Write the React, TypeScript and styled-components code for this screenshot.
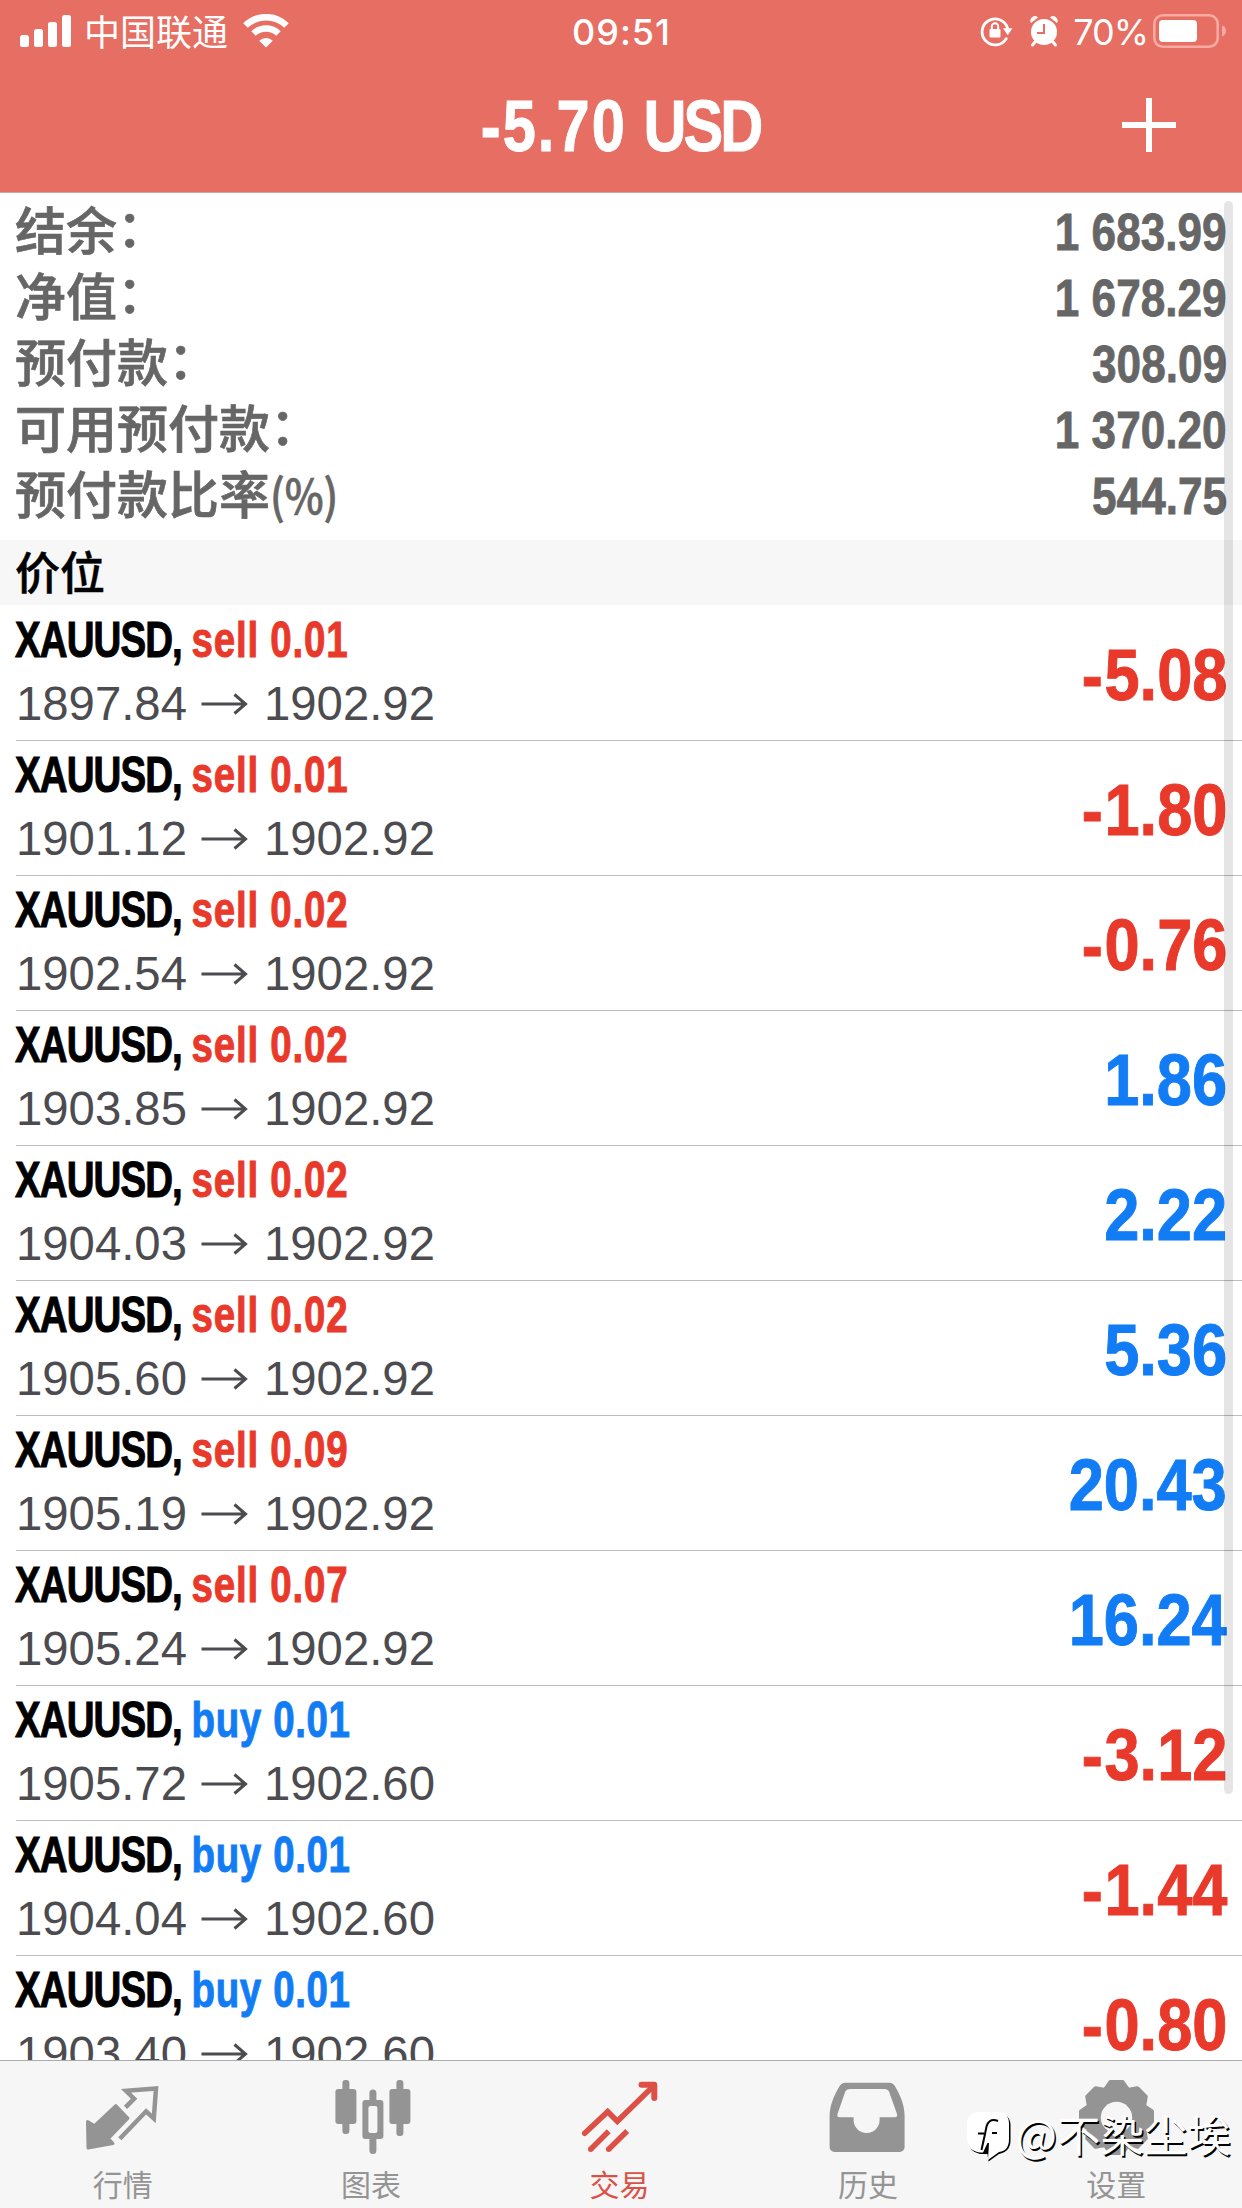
import React from 'react';
import styled, { createGlobalStyle } from 'styled-components';

const GlobalStyle = createGlobalStyle`
  * {
    box-sizing: border-box;
  }

  body {
    margin: 0;
    background: #fff;
    font-family: 'Liberation Sans', 'Noto Sans CJK SC', sans-serif;
  }
`;

// Styled Components
const Screen = styled.div`
  position: relative;
  display: flex;
  flex-direction: column;
  width: 1242px;
  height: 2208px;
  overflow: hidden;
  background: #fff;
`;

const Header = styled.header`
  flex: none;
  height: 193px;
  background: #e66e62;
  border-bottom: 1px solid #c3aaa7;
  color: #fff;
`;

const StatusBar = styled.div`
  display: grid;
  grid-template-columns: 1fr auto 1fr;
  align-items: center;
  height: 60px;
  padding: 0 16px 0 20px;
`;

const StatusGroup = styled.div<{ $end?: boolean }>`
  display: flex;
  align-items: center;
  justify-content: ${({ $end }) => ($end ? 'flex-end' : 'flex-start')};

  svg {
    display: block;
    flex: none;
  }
`;

const StatusGap = styled.div`
  width: 17px;
`;

const Carrier = styled.span`
  margin: -2px 15px 0 12px;
  font-family: 'Noto Sans CJK SC', sans-serif;
  font-size: 36px;
  line-height: 60px;
`;

const Clock = styled.span`
  margin-right: 3px;
  font-family: Inter, sans-serif;
  font-size: 36px;
  font-weight: 500;
  line-height: 60px;
  letter-spacing: 1px;
  padding-top: 2px;
`;

const BatteryText = styled.span`
  margin: 0 5px 0 15px;
  font-family: Inter, sans-serif;
  font-size: 36px;
  line-height: 60px;
  letter-spacing: -1px;
  padding-top: 2px;
`;

const TitleBar = styled.div`
  display: grid;
  grid-template-columns: 1fr auto 1fr;
  align-items: center;
  height: 132px;
`;

const Title = styled.h1`
  grid-column: 2;
  margin: 0;
  font-size: 73px;
  font-weight: 700;
  line-height: 132px;
  transform: scaleX(0.815);
  -webkit-text-stroke: 1px currentColor;
`;

const Amount = styled.span`
  letter-spacing: 2.6px;
`;

const Currency = styled.span`
  letter-spacing: -3.6px;
`;

const AddButton = styled.button`
  justify-self: end;
  width: 54px;
  height: 54px;
  margin: 0 66px 2px 0;
  padding: 0;
  border: none;
  background: transparent;
  color: #fff;

  svg {
    display: block;
  }
`;

const Content = styled.main`
  flex: 1;
  min-height: 0;
  overflow: hidden;
`;

const Summary = styled.section`
  height: 347px;
  padding: 7px 15px 0;
`;

const SummaryRow = styled.div`
  display: flex;
  justify-content: space-between;
  height: 66px;
  color: #666;
`;

const SummaryLabel = styled.span`
  font-family: 'Noto Sans CJK SC', sans-serif;
  font-size: 51px;
  font-weight: 500;
  line-height: 56px;
  -webkit-text-stroke: 0.7px currentColor;
`;

const Colon = styled.span`
  vertical-align: 3px;
  line-height: 0;
`;

const Unit = styled.span`
  display: inline-block;
  font-size: 47px;
  line-height: 56px;
  transform: scaleX(0.88);
  transform-origin: left center;
`;

const SummaryValue = styled.span`
  font-size: 51px;
  font-weight: 700;
  line-height: 65px;
  transform: scaleX(0.865);
  transform-origin: right center;
  -webkit-text-stroke: 0.8px currentColor;
`;

const SectionTitle = styled.h2`
  height: 66px;
  margin: 0;
  padding-left: 15px;
  border-bottom: 1px solid #fff;
  background: #f7f7f7;
  color: #000;
  font-family: 'Noto Sans CJK SC', sans-serif;
  font-size: 45px;
  font-weight: 500;
  line-height: 62px;
  -webkit-text-stroke: 0.5px currentColor;
`;

const Position = styled.div`
  display: flex;
  justify-content: space-between;
  height: 135px;
  margin-left: 16px;
  padding-right: 15px;
  border-bottom: 1px solid #bcbcbe;
`;

const PositionInfo = styled.div`
  padding-top: 6px;
`;

const PositionName = styled.div`
  height: 60px;
  margin-left: -1px;
  color: #000;
  font-size: 50px;
  font-weight: 700;
  line-height: 57px;
  white-space: pre;
  transform: scaleX(0.77);
  transform-origin: left center;
  -webkit-text-stroke: 1px currentColor;
`;

const SymbolName = styled.span`
  letter-spacing: -1.2px;
`;

const Side = styled.span<{ $side: 'buy' | 'sell' }>`
  color: ${({ $side }) => ($side === 'buy' ? '#127cf5' : '#e8392b')};
  letter-spacing: ${({ $side }) => ($side === 'buy' ? '0.8px' : '1px')};
`;

const PriceLine = styled.div`
  display: flex;
  align-items: center;
  height: 64px;
  color: #4c4c50;
  font-size: 47.3px;
  line-height: 64px;

  svg {
    margin: 0 16px 0 13px;
  }
`;

const Profit = styled.div<{ $loss: boolean }>`
  color: ${({ $loss }) => ($loss ? '#e8392b' : '#127cf5')};
  font-size: 73px;
  font-weight: 700;
  line-height: 138px;
  transform: scaleX(0.865);
  transform-origin: right center;
  -webkit-text-stroke: 1px currentColor;

  &::first-letter {
    letter-spacing: ${({ $loss }) => ($loss ? '2px' : '0')};
  }
`;

const ScrollThumb = styled.div`
  position: absolute;
  top: 201px;
  right: 9px;
  width: 9px;
  height: 1593px;
  border-radius: 5px;
  background: rgba(0, 0, 0, 0.1);
`;

const TabBar = styled.nav`
  display: grid;
  grid-template-columns: repeat(5, 1fr);
  flex: none;
  height: 148px;
  border-top: 1px solid #a9aeaa;
  background: #f6f6f6;
`;

const Tab = styled.div<{ $active?: boolean }>`
  display: flex;
  flex-direction: column;
  align-items: center;
  padding-top: 11px;
  color: ${({ $active }) => ($active ? '#dc5045' : '#949494')};
`;

const TabLabel = styled.span`
  margin: 5px 3px 0 0;
  font-family: 'Noto Sans CJK SC', sans-serif;
  font-size: 30px;
  line-height: 44px;
`;

const Watermark = styled.div`
  position: absolute;
  right: 11px;
  bottom: 43px;
  display: flex;
  align-items: center;
  color: #fff;
  font-family: 'Noto Sans CJK SC', sans-serif;
  font-size: 43.5px;
  line-height: 62px;
  text-shadow: 1.5px 1.5px 0 #000;

  svg {
    margin: 5px 5px 0 0;
  }
`;

const SignalIcon = () => (
  <svg width="52" height="34" viewBox="0 0 52 34" fill="currentColor">
    <rect x="0" y="21" width="9" height="12" rx="2.5" />
    <rect x="14" y="15" width="9" height="18" rx="2.5" />
    <rect x="28" y="8" width="9" height="25" rx="2.5" />
    <rect x="42" y="1" width="9" height="32" rx="2.5" />
  </svg>
);

const WifiIcon = () => (
  <svg width="46" height="34" viewBox="0 0 46 34" fill="none" stroke="currentColor">
    <path d="M2.5 11.5a29.5 29.5 0 0 1 41 0" strokeWidth="6.6" />
    <path d="M10.5 19.5a18 18 0 0 1 25 0" strokeWidth="6.4" />
    <path d="M23 33.5l-6.8-6.8a9.6 9.6 0 0 1 13.6 0z" fill="currentColor" stroke="none" />
  </svg>
);

const RotationLockIcon = () => (
  <svg width="33" height="32" viewBox="0 0 33 32" fill="none" stroke="currentColor">
    <path d="M26.2 23.7A13 13 0 1 1 27.5 13" strokeWidth="2.8" strokeLinecap="round" />
    <path d="M23 13.2h9.5l-4.8 7z" fill="currentColor" stroke="none" />
    <rect x="9.5" y="14" width="11" height="8.6" rx="1" fill="currentColor" stroke="none" />
    <path d="M11.8 14.5v-3a3.2 3.2 0 0 1 6.4 0v3" strokeWidth="2" />
  </svg>
);

const AlarmIcon = () => (
  <svg width="28" height="32" viewBox="0 0 28 32">
    <circle cx="14" cy="17" r="13" fill="currentColor" />
    <path d="M5 27l-2.5 3M23 27l2.5 3" stroke="currentColor" strokeWidth="3" strokeLinecap="round" />
    <path d="M1 8a4.5 4.5 0 0 1 7-5.5zM27 8a4.5 4.5 0 0 0-7-5.5z" fill="currentColor" />
    <path d="M14 9v9H7" fill="none" stroke="#e66e62" strokeWidth="2" />
  </svg>
);

const BatteryIcon = () => (
  <svg width="73" height="34" viewBox="0 0 73 34">
    <rect x="1.3" y="1.3" width="63.4" height="31.4" rx="8.5" fill="none" stroke="#f6aaa2" strokeWidth="2.6" />
    <rect x="6" y="6" width="38" height="22" rx="4" fill="#fff" />
    <path d="M69 11.5c5.3 1.6 5.3 9.4 0 11z" fill="#f6aaa2" />
  </svg>
);

const PlusIcon = () => (
  <svg width="54" height="54" viewBox="0 0 54 54" stroke="currentColor" strokeWidth="6">
    <path d="M27 0v54M0 27h54" />
  </svg>
);

const ArrowIcon = () => (
  <svg width="48" height="24" viewBox="0 0 48 24" fill="none" stroke="currentColor" strokeWidth="3">
    <path d="M1.5 12h44M34.5 2.5L45.5 12l-11 9.5" />
  </svg>
);

const QuotesIcon = () => (
  <svg width="90" height="84" viewBox="0 0 90 84">
    <path
      d="M8.5 49.5l7 4L36.8 33.5 49 46.3 29.5 66.5l4.5 5L9 76z"
      fill="currentColor"
      stroke="currentColor"
      strokeWidth="3"
      strokeLinejoin="round"
    />
    <path
      d="M46.5 35.3l8.6-8.6-8.1-7.9 30-2.3-2.2 30-7.7-7.200-26.300 27.400"
      fill="none"
      stroke="currentColor"
      strokeWidth="4.5"
    />
  </svg>
);

const ChartIcon = () => (
  <svg width="90" height="84" viewBox="0 0 90 84" fill="currentColor">
    <rect x="7.4" y="17" width="21" height="35" rx="3" />
    <rect x="14.4" y="8" width="7" height="54" rx="3" />
    <path
      fillRule="evenodd"
      d="M37.4 28h15a3 3 0 0 1 3 3v33a3 3 0 0 1-3 3h-15a3 3 0 0 1-3-3V31a3 3 0 0 1 3-3zm5 6a2 2 0 0 0-2 2v23a2 2 0 0 0 2 2h5a2 2 0 0 0 2-2V36a2 2 0 0 0-2-2z"
    />
    <path d="M41.4 29v-8a3.5 3.5 0 0 1 7 0v8zM41.4 66v12.5a3.5 3.5 0 0 0 7 0V66z" />
    <rect x="61.4" y="17" width="21" height="35" rx="3" />
    <rect x="68.4" y="8" width="7" height="56" rx="3" />
  </svg>
);

const TradeIcon = () => (
  <svg width="90" height="84" viewBox="0 0 90 84" fill="none" stroke="currentColor" strokeWidth="5.5">
    <path d="M8.7 61.3l23-21.6 9.6 9.6L78 13.5" strokeLinecap="round" />
    <path d="M65.5 12.8h12.8V26" strokeWidth="6" strokeLinecap="round" strokeLinejoin="round" />
    <path d="M14.7 77.3l18-18M32.7 77.3l18.5-18.3" />
    <circle cx="14.7" cy="77.3" r="2.75" fill="currentColor" stroke="none" />
    <circle cx="32.7" cy="77.3" r="2.75" fill="currentColor" stroke="none" />
  </svg>
);

const HistoryIcon = () => (
  <svg width="90" height="84" viewBox="0 0 90 84" fill="currentColor">
    <path
      fillRule="evenodd"
      d="M21 10.7h44.5q3.5 0 5.5 3.5c6 10 9.6 20 9.6 30V75a5 5 0 0 1-5 5h-65a5 5 0 0 1-5-5V44.2c0-10 3.9-20 9.9-30q2-3.5 5.5-3.5zM25.5 17q-3 0-4.2 2.5L13.5 42q-.7 3.3 2 3.3h14.1V48a13 13 0 0 0 26 0v-2.7H71q2.5 0 2-3.3L65 19.5Q63.8 17 61 17z"
    />
  </svg>
);

const gearPoints = Array.from({ length: 8 }, (_, i) => {
  const angle = (i * Math.PI) / 4;
  const tooth = [[-11.5, -27.5], [-6, -35.5], [6, -35.5], [11.5, -27.5]];
  return tooth
    .map(([x, y]) => {
      const px = 43.5 + x * Math.cos(angle) - y * Math.sin(angle);
      const py = 45.5 + x * Math.sin(angle) + y * Math.cos(angle);
      return `${px.toFixed(1)},${py.toFixed(1)}`;
    })
    .join(' ');
}).join(' ');

const SettingsIcon = () => (
  <svg width="90" height="84" viewBox="0 0 90 84">
    <polygon points={gearPoints} fill="currentColor" stroke="currentColor" strokeWidth="4" strokeLinejoin="round" />
    <circle cx="43.5" cy="45.5" r="15.7" fill="#f6f6f6" />
  </svg>
);

// speech bubble with a slanted stroke and a short crossbar
const WatermarkLogo = () => (
  <svg width="44" height="52" viewBox="0 0 44 52">
    <path d="M13 2.5h17q13.500 0 13.500 12v15q0 11-11.500 13.500L21.500 50.500l-1-7.500H13Q2 41 1.500 29.500V14.500Q2 2.500 13 2.500z" fill="#000" />
    <path d="M12 1h18q12 0 12 12v15q0 12-10 13l-11 8 1-17h-1.500l-4.500 9.500h-3Q1 40 0 28V13Q0 1 12 1z" fill="#fff" />
    <path d="M11 22.500h6m8-.500h5M31 10c-7-3-11 1-12 8l-1 5-3.500 16" fill="none" stroke="#000" strokeWidth="2" />
  </svg>
);

interface PositionData {
  side: 'buy' | 'sell';
  volume: string;
  open: string;
  current: string;
  profit: string;
}

const summary = [
  { label: '结余', colon: true, value: '1 683.99' },
  { label: '净值', colon: true, value: '1 678.29' },
  { label: '预付款', colon: true, value: '308.09' },
  { label: '可用预付款', colon: true, value: '1 370.20' },
  { label: '预付款比率', unit: '(%)', value: '544.75' },
];

const positions: PositionData[] = [
  { side: 'sell', volume: '0.01', open: '1897.84', current: '1902.92', profit: '-5.08' },
  { side: 'sell', volume: '0.01', open: '1901.12', current: '1902.92', profit: '-1.80' },
  { side: 'sell', volume: '0.02', open: '1902.54', current: '1902.92', profit: '-0.76' },
  { side: 'sell', volume: '0.02', open: '1903.85', current: '1902.92', profit: '1.86' },
  { side: 'sell', volume: '0.02', open: '1904.03', current: '1902.92', profit: '2.22' },
  { side: 'sell', volume: '0.02', open: '1905.60', current: '1902.92', profit: '5.36' },
  { side: 'sell', volume: '0.09', open: '1905.19', current: '1902.92', profit: '20.43' },
  { side: 'sell', volume: '0.07', open: '1905.24', current: '1902.92', profit: '16.24' },
  { side: 'buy', volume: '0.01', open: '1905.72', current: '1902.60', profit: '-3.12' },
  { side: 'buy', volume: '0.01', open: '1904.04', current: '1902.60', profit: '-1.44' },
  { side: 'buy', volume: '0.01', open: '1903.40', current: '1902.60', profit: '-0.80' },
];

const tabs = [
  { label: '行情', icon: <QuotesIcon /> },
  { label: '图表', icon: <ChartIcon /> },
  { label: '交易', icon: <TradeIcon />, active: true },
  { label: '历史', icon: <HistoryIcon /> },
  { label: '设置', icon: <SettingsIcon /> },
];

const App: React.FC = () => {
  return (
    <Screen>
      <GlobalStyle />
      <Header>
        <StatusBar>
          <StatusGroup>
            <SignalIcon />
            <Carrier>中国联通</Carrier>
            <WifiIcon />
          </StatusGroup>
          <Clock>09:51</Clock>
          <StatusGroup $end>
            <RotationLockIcon />
            <StatusGap />
            <AlarmIcon />
            <BatteryText>70%</BatteryText>
            <BatteryIcon />
          </StatusGroup>
        </StatusBar>
        <TitleBar>
          <Title>
            <Amount>-5.70</Amount> <Currency>USD</Currency>
          </Title>
          <AddButton>
            <PlusIcon />
          </AddButton>
        </TitleBar>
      </Header>

      <Content>
        <Summary>
          {summary.map((row) => (
            <SummaryRow key={row.label}>
              <SummaryLabel>
                {row.label}
                {row.colon && <Colon>：</Colon>}
                {row.unit && <Unit>{row.unit}</Unit>}
              </SummaryLabel>
              <SummaryValue>{row.value}</SummaryValue>
            </SummaryRow>
          ))}
        </Summary>
        <SectionTitle>价位</SectionTitle>
        {positions.map((p, i) => (
          <Position key={i}>
            <PositionInfo>
              <PositionName>
                <SymbolName>XAUUSD, </SymbolName>
                <Side $side={p.side}>
                  {p.side} {p.volume}
                </Side>
              </PositionName>
              <PriceLine>
                {p.open}
                <ArrowIcon />
                {p.current}
              </PriceLine>
            </PositionInfo>
            <Profit $loss={p.profit.startsWith('-')}>{p.profit}</Profit>
          </Position>
        ))}
      </Content>
      <ScrollThumb />

      <TabBar>
        {tabs.map((tab) => (
          <Tab key={tab.label} $active={tab.active}>
            {tab.icon}
            <TabLabel>{tab.label}</TabLabel>
          </Tab>
        ))}
      </TabBar>

      <Watermark>
        <WatermarkLogo />
        @不染尘埃
      </Watermark>
    </Screen>
  );
};

export default App;
